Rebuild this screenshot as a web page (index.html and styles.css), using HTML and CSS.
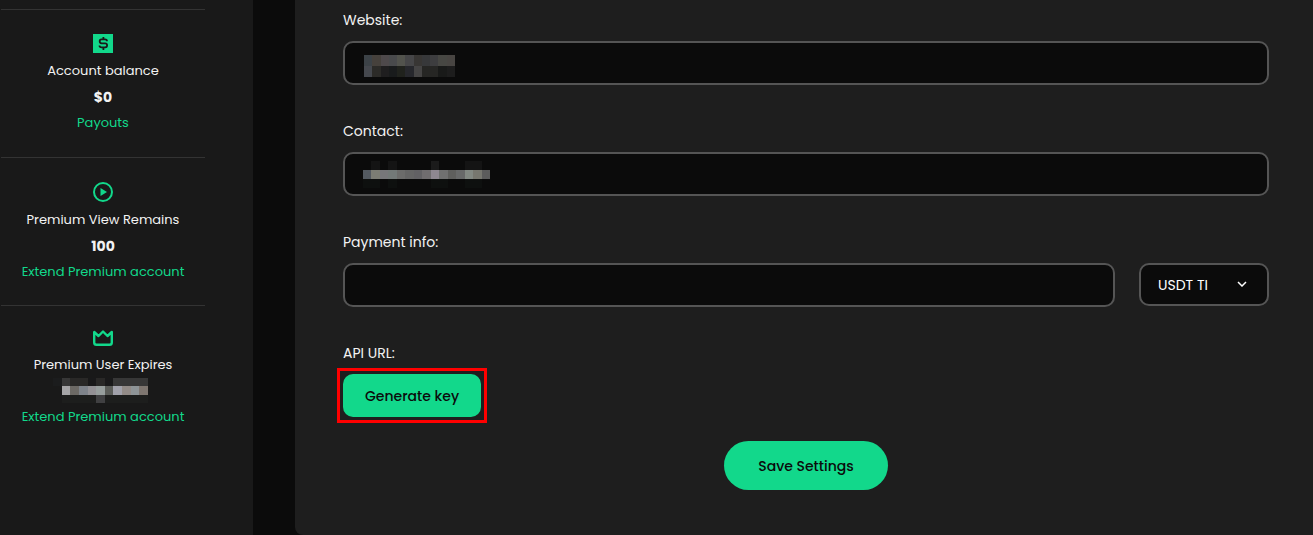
FILE: index.html
```html
<!DOCTYPE html>
<html lang="en">
<head>
<meta charset="utf-8">
<meta name="viewport" content="width=device-width, initial-scale=1">
<title>Account settings</title>
<link rel="stylesheet" href="styles.css">
</head>
<body>
<div class="layout">
  <aside class="sidebar">
    <section class="stat">
      <svg class="stat-icon" viewBox="0 0 20 19" width="20" height="19" aria-hidden="true"><path fill="#12d88b" d="M0 0h20v19H0z"/><path d="M14 7.200Q14 5.300 12 5.300H8.500Q6.700 5.300 6.700 7.200T8.500 9.300H12.200Q14.100 9.300 14.100 11.300T12.200 13.300H8.500Q6.500 13.300 6.500 11.500M10.400 3V5M10.400 13.500V16" fill="none" stroke="#191919" stroke-width="1.800"/></svg>
      <p class="stat-name">Account balance</p>
      <p class="stat-value">$0</p>
      <a class="stat-link" href="#payouts">Payouts</a>
    </section>
    <section class="stat">
      <svg class="stat-icon" viewBox="0 0 20 20" width="20" height="20" aria-hidden="true"><circle cx="10" cy="10" r="9" fill="none" stroke="#12d88b" stroke-width="2"/><path d="M7.500 6v8L14 10z" fill="#12d88b"/></svg>
      <p class="stat-name">Premium View Remains</p>
      <p class="stat-value">100</p>
      <a class="stat-link" href="#extend-views">Extend Premium account</a>
    </section>
    <section class="stat">
      <svg class="stat-icon" viewBox="0 0 20 17" width="20" height="17" aria-hidden="true"><path d="M1.200 2V12.500Q1.200 14.800 3.500 14.800H16.500Q18.800 14.800 18.800 12.500V2L14.500 6 10 1.500 5.500 6Z" fill="none" stroke="#12d88b" stroke-width="2.400" stroke-linejoin="round"/></svg>
      <p class="stat-name">Premium User Expires</p>
      <p class="stat-value">
        <svg class="mosaic mosaic-date" viewBox="0 0 11 3" preserveAspectRatio="none" shape-rendering="crispEdges" role="img" aria-label="Hidden date">
          <path fill="#1b1c1d" d="M0 0h1v1H0z"/><path fill="#373737" d="M1 0h1v1H1zM7 0h4v1H7z"/><path fill="#292827" d="M2 0h2v1H2zM5 0h1v1H5z"/><path fill="#19191a" d="M4 0h1v1H4zM6 0h1v1H6z"/>
          <path fill="#a5a5a7" d="M1 1h1v1H1z"/><path fill="#6c6965" d="M2 1h1v1H2z"/><path fill="#7e838a" d="M3 1h1v1H3z"/><path fill="#939195" d="M4 1h1v1H4z"/><path fill="#979e9d" d="M5 1h1v1H5z"/><path fill="#5b5d59" d="M6 1h1v1H6z"/><path fill="#a1a1aa" d="M7 1h1v1H7z"/><path fill="#928b87" d="M8 1h1v1H8z"/><path fill="#8e9497" d="M9 1h1v1H9z"/><path fill="#7e7670" d="M10 1h1v1h-1z"/>
          <path fill="#1d1e1d" d="M1 2h4v1H1zM6 2h5v1H6z"/><path fill="#404042" d="M5 2h1v1H5z"/>
        </svg>
      </p>
      <a class="stat-link" href="#extend-premium">Extend Premium account</a>
    </section>
  </aside>
  <main class="panel">
    <form class="form">
      <div class="field">
        <label class="label" for="website">Website:</label>
        <div class="control">
          <input class="input" id="website" type="text">
          <svg class="mosaic mosaic-website" viewBox="0 0 11 2" preserveAspectRatio="none" shape-rendering="crispEdges" aria-hidden="true">
            <path fill="#3c4247" d="M0 0h1v1H0z"/><path fill="#46413c" d="M1 0h1v1H1z"/><path fill="#4e494b" d="M2 0h1v1H2z"/><path fill="#494a4c" d="M3 0h1v1H3z"/><path fill="#52534d" d="M4 0h1v1H4z"/><path fill="#464648" d="M5 0h1v1H5z"/><path fill="#383634" d="M6 0h1v1H6z"/><path fill="#37383a" d="M7 0h1v1H7z"/><path fill="#3d3d3f" d="M8 0h1v1H8z"/><path fill="#474743" d="M9 0h1v1H9z"/><path fill="#484542" d="M10 0h1v1h-1z"/>
            <path fill="#45484e" d="M0 1h1v1H0z"/><path fill="#2c2b28" d="M1 1h1v1H1z"/><path fill="#1f1e1f" d="M2 1h1v1H2z"/><path fill="#191b1c" d="M3 1h1v1H3z"/><path fill="#20221d" d="M4 1h1v1H4z"/><path fill="#26272c" d="M5 1h1v1H5z"/><path fill="#454444" d="M6 1h1v1H6z"/><path fill="#262624" d="M7 1h2v1H7z"/><path fill="#191a19" d="M9 1h1v1H9z"/><path fill="#1d1d1d" d="M10 1h1v1h-1z"/>
          </svg>
        </div>
      </div>
      <div class="field">
        <label class="label" for="contact">Contact:</label>
        <div class="control">
          <input class="input" id="contact" type="text">
          <svg class="mosaic mosaic-contact" viewBox="0 0 15 3" preserveAspectRatio="none" shape-rendering="crispEdges" aria-hidden="true">
            <path fill="#141414" d="M1 0h1v1H1zM3 0h1v1H3zM12 0h2v1h-2z"/><path fill="#1b1b1b" d="M8 0h1v1H8z"/>
            <path fill="#535960" d="M0 1h1v1H0z"/><path fill="#7c7d74" d="M1 1h1v1H1z"/><path fill="#77777a" d="M2 1h1v1H2z"/><path fill="#737978" d="M3 1h1v1H3z"/><path fill="#6c6c6b" d="M4 1h1v1H4z"/><path fill="#656565" d="M5 1h1v1H5z"/><path fill="#626164" d="M6 1h1v1H6z"/><path fill="#706d6f" d="M7 1h1v1H7z"/><path fill="#8e8790" d="M8 1h1v1H8z"/><path fill="#707070" d="M9 1h1v1H9z"/><path fill="#5f5f5d" d="M10 1h1v1h-1z"/><path fill="#686969" d="M11 1h1v1h-1z"/><path fill="#828882" d="M12 1h1v1h-1z"/><path fill="#77776f" d="M13 1h1v1h-1z"/><path fill="#5c5c5c" d="M14 1h1v1h-1z"/>
            <path fill="#0e100f" d="M0 2h2v1H0zM3 2h1v1H3zM8 2h2v1H8zM12 2h2v1h-2z"/>
          </svg>
        </div>
      </div>
      <div class="field">
        <label class="label" for="payment">Payment info:</label>
        <div class="payment-row">
          <input class="input" id="payment" type="text">
          <div class="control currency">
            <select class="select" aria-label="Currency"><option>USDT TI</option></select>
            <svg class="chevron" viewBox="0 0 10 6" width="10" height="6" aria-hidden="true"><path d="M1 1l4 4 4-4" fill="none" stroke="#fff" stroke-width="1.500"/></svg>
          </div>
        </div>
      </div>
      <div class="field">
        <span class="label">API URL:</span>
        <div class="highlight">
          <button class="generate" type="button">Generate key</button>
        </div>
      </div>
      <button class="save" type="submit">Save Settings</button>
    </form>
  </main>
</div>
</body>
</html>
```

FILE: styles.css
```css
* { box-sizing: border-box; }

body {
  margin: 0;
  background: #0b0b0b;
  color: #f2f2f2;
  font-family: Poppins, Inter, "Open Sans", sans-serif;
  font-size: 14px;
}

.layout {
  display: flex;
  gap: 42px;
  min-height: 100vh;
}

.sidebar {
  flex: 0 0 253px;
  padding: 9px 48px 0 1px;
  background: #191919;
}

.stat {
  display: flex;
  flex-direction: column;
  align-items: center;
  min-height: 148px;
  padding-top: 24px;
  border-top: 1px solid #333;
  font-size: 13px;
  line-height: 26px;
  white-space: nowrap;
}

.stat-icon {
  display: block;
  margin-bottom: 5px;
}

.stat-name,
.stat-value { margin: 0; }

.stat-value {
  height: 26px;
  font-size: 14px;
  font-weight: 700;
}

.stat-link {
  color: #12d88b;
  text-decoration: none;
}

.mosaic { display: block; }

.mosaic-date {
  width: 95px;
  height: 25px;
  margin-right: 6px;
}

.panel {
  flex: 1;
  min-width: 0;
  padding: 8px 44px 45px 48px;
  background: #1e1e1e;
  border-bottom-left-radius: 8px;
}

.form {
  display: flex;
  flex-direction: column;
  gap: 34px;
}

.field {
  display: flex;
  flex-direction: column;
  gap: 9px;
}

.label { line-height: 24px; }

.control { position: relative; }

.input,
.select {
  display: block;
  width: 100%;
  height: 44px;
  padding: 0 18px;
  border: 2px solid #555;
  border-radius: 10px;
  background: #0b0b0b;
  color: #fff;
  font: inherit;
}

.mosaic-website,
.mosaic-contact {
  position: absolute;
  left: 20px;
  pointer-events: none;
}

.mosaic-website {
  left: 21px;
  top: 14px;
  width: 91px;
  height: 22px;
}

.mosaic-contact {
  top: 9px;
  width: 127px;
  height: 27px;
}

.payment-row {
  display: flex;
  gap: 24px;
}

.payment-row .input {
  flex: 1;
  min-width: 0;
}

.currency { flex: 0 0 130px; }

.select {
  appearance: none;
  height: 43px;
  padding: 0 17px;
}

.chevron {
  position: absolute;
  top: 18px;
  right: 22px;
  pointer-events: none;
}

.generate,
.save {
  display: block;
  padding: 2px 0 0;
  border: 0;
  background: #12d88b;
  color: #0b0b0b;
  font: inherit;
  font-weight: 500;
}

.highlight {
  align-self: flex-start;
  margin: -6px;
  padding: 3px;
  border: 3px solid #f00;
}

.generate {
  width: 138px;
  height: 43px;
  border-radius: 10px;
}

.save {
  align-self: center;
  width: 164px;
  height: 49px;
  margin-top: -10px;
  border-radius: 25px;
}
```
